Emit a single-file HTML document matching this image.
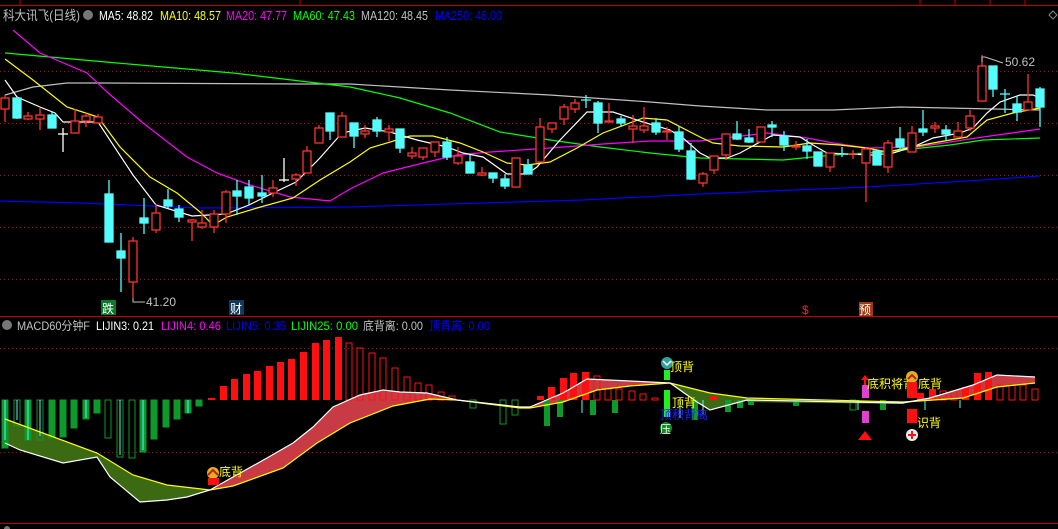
<!DOCTYPE html>
<html><head><meta charset="utf-8"><style>
html,body{margin:0;padding:0;background:#000;}
body{width:1058px;height:529px;overflow:hidden;position:relative;}
svg{position:absolute;left:0;top:0;}
text{font-family:"Liberation Sans","Noto Sans CJK SC",sans-serif;}
</style></head><body>
<svg width="1058" height="529" viewBox="0 0 1058 529">
<rect width="1058" height="529" fill="#000"/>
<line x1="0" y1="5.5" x2="1058" y2="5.5" stroke="#c00000"/>
<g stroke="#c00000"><line x1="20" y1="0" x2="20" y2="5"/><line x1="300" y1="0" x2="300" y2="5"/><line x1="920" y1="0" x2="920" y2="5"/><line x1="955" y1="0" x2="955" y2="5"/><line x1="990" y1="0" x2="990" y2="5"/><line x1="1025" y1="0" x2="1025" y2="5"/></g>
<path d="M1053 11 l4 4 -4 4 -4 -4z" fill="none" stroke="#888"/>
<g stroke="#802020" stroke-dasharray="1,3">
<line x1="0" y1="71.5" x2="1058" y2="71.5"/><line x1="0" y1="123.5" x2="1058" y2="123.5"/><line x1="0" y1="175.5" x2="1058" y2="175.5"/><line x1="0" y1="227.5" x2="1058" y2="227.5"/><line x1="0" y1="279.5" x2="1058" y2="279.5"/>
<line x1="0" y1="348.5" x2="1058" y2="348.5"/><line x1="0" y1="452.5" x2="1058" y2="452.5"/>
</g>
<text x="3" y="20" font-size="13" fill="#c0c0c0" textLength="77" lengthAdjust="spacingAndGlyphs">科大讯飞(日线)</text>
<circle cx="88" cy="15" r="5" fill="#777"/>
<text x="99" y="20" font-size="12.5" fill="#fff" textLength="54" lengthAdjust="spacingAndGlyphs">MA5: 48.82</text>
<text x="160" y="20" font-size="12.5" fill="#ffff00" textLength="61" lengthAdjust="spacingAndGlyphs">MA10: 48.57</text>
<text x="226" y="20" font-size="12.5" fill="#ff00ff" textLength="61" lengthAdjust="spacingAndGlyphs">MA20: 47.77</text>
<text x="293" y="20" font-size="12.5" fill="#00ff00" textLength="62" lengthAdjust="spacingAndGlyphs">MA60: 47.43</text>
<text x="361" y="20" font-size="12.5" fill="#c0c0c0" textLength="67" lengthAdjust="spacingAndGlyphs">MA120: 48.45</text>
<text x="435" y="20" font-size="12.5" fill="#0000ff" textLength="67" lengthAdjust="spacingAndGlyphs">MA250: 46.00</text>

<g fill="none" stroke-width="1.2">
<polyline stroke="#0000ff" points="0,201 80,203 200,208 350,207 483,203 583,200 700,194 867,187 983,180 1040,176"/>
<polyline stroke="#c0c0c0" points="5,95 33,87 67,83 100,83 300,84 350,84 450,90 550,95 650,102 700,106 767,110 833,110 900,107 1040,110"/>
<polyline stroke="#00ff00" points="5,53 117,63 233,73 350,87 400,98 450,113 500,132 550,140 600,147 650,153 700,158 783,160 833,155 883,152 950,145 983,140 1040,138"/>
<polyline stroke="#ff00ff" points="13,30 40,53 87,73 107,92 143,123 187,157 217,173 250,185 290,197 330,201 350,189 383,173 423,163 457,155 490,152 550,148 603,144 650,141 700,141 733,137 767,133 807,138 833,143 867,148 917,147 950,142 983,137 1040,129"/>
<polyline stroke="#ffff00" points="5,59 33,80 67,107 98,117 120,147 150,177 177,193 200,212 213,225 227,217 257,208 293,198 320,180 350,162 370,148 410,136 433,136 460,143 483,152 507,163 527,165 550,162 577,148 603,133 643,118 667,120 700,137 713,143 740,146 783,147 810,143 840,145 867,148 887,152 907,148 933,143 967,137 987,120 1013,113 1040,108"/>
<polyline stroke="#ffffff" points="5,80 17,97 40,107 55,113 63,122 98,122 133,175 156,205 192,216 226,214 249,205 273,193 296,182 319,159 342,133 365,128 390,132 417,140 447,147 463,153 483,157 507,174 527,174 537,167 560,140 587,112 613,112 643,122 670,130 683,138 700,153 710,158 727,158 740,153 760,142 773,135 800,137 813,145 827,153 847,154 873,155 893,153 913,147 933,138 960,133 973,128 987,113 1000,102 1020,95 1033,95 1040,98"/>
</g>

<g stroke="#ff3232" stroke-width="1.3" fill="#000">
<line x1="5" y1="95" x2="5" y2="122"/><rect x="1" y="98" width="8" height="11"/>
<line x1="28" y1="112" x2="28" y2="120"/><rect x="24" y="116" width="8" height="3"/>
<line x1="40" y1="108" x2="40" y2="130"/><rect x="36" y="115" width="8" height="4"/>
<line x1="75" y1="109" x2="75" y2="133"/><rect x="71" y="121" width="8" height="12"/>
<line x1="86" y1="113" x2="86" y2="127"/><rect x="82" y="116" width="8" height="5"/>
<line x1="98" y1="114" x2="98" y2="123"/><rect x="94" y="117" width="8" height="6"/>
<line x1="133" y1="237" x2="133" y2="298"/><rect x="129" y="241" width="8" height="41"/>
<line x1="156" y1="204" x2="156" y2="233"/><rect x="152" y="213" width="8" height="17"/>
<line x1="192" y1="219" x2="192" y2="241"/><rect x="188" y="220" width="8" height="2"/>
<line x1="202" y1="210" x2="202" y2="229"/><rect x="198" y="223" width="8" height="4"/>
<line x1="214" y1="210" x2="214" y2="233"/><rect x="210" y="214" width="8" height="13"/>
<line x1="226" y1="190" x2="226" y2="223"/><rect x="222" y="192" width="8" height="22"/>
<line x1="273" y1="180" x2="273" y2="197"/><rect x="269" y="188" width="8" height="5"/>
<line x1="296" y1="173" x2="296" y2="186"/><rect x="292" y="175" width="8" height="4"/>
<line x1="307" y1="146" x2="307" y2="173"/><rect x="303" y="151" width="8" height="22"/>
<line x1="319" y1="125" x2="319" y2="143"/><rect x="315" y="128" width="8" height="15"/>
<line x1="342" y1="112" x2="342" y2="137"/><rect x="338" y="116" width="8" height="21"/>
<line x1="365" y1="125" x2="365" y2="138"/><rect x="361" y="131" width="8" height="3"/>
<line x1="389" y1="125" x2="389" y2="141"/><rect x="385" y="129" width="8" height="3"/>
<line x1="412" y1="147" x2="412" y2="159"/><rect x="408" y="153" width="8" height="3"/>
<line x1="423" y1="148" x2="423" y2="160"/><rect x="419" y="148" width="8" height="9"/>
<line x1="435" y1="142" x2="435" y2="157"/><rect x="431" y="142" width="8" height="10"/>
<line x1="458" y1="147" x2="458" y2="165"/><rect x="454" y="156" width="8" height="7"/>
<line x1="482" y1="167" x2="482" y2="176"/><rect x="478" y="173" width="8" height="2"/>
<line x1="516" y1="158" x2="516" y2="187"/><rect x="512" y="158" width="8" height="29"/>
<line x1="540" y1="118" x2="540" y2="162"/><rect x="536" y="127" width="8" height="35"/>
<line x1="552" y1="123" x2="552" y2="133"/><rect x="548" y="123" width="8" height="6"/>
<line x1="564" y1="104" x2="564" y2="125"/><rect x="560" y="107" width="8" height="12"/>
<line x1="575" y1="99" x2="575" y2="113"/><rect x="571" y="103" width="8" height="6"/>
<line x1="609" y1="103" x2="609" y2="122"/><rect x="605" y="121" width="8" height="1"/>
<line x1="633" y1="115" x2="633" y2="143"/><rect x="629" y="126" width="8" height="3"/>
<line x1="644" y1="107" x2="644" y2="133"/><rect x="640" y="126" width="8" height="4"/>
<line x1="667" y1="127" x2="667" y2="140"/><rect x="663" y="131" width="8" height="1"/>
<line x1="703" y1="172" x2="703" y2="187"/><rect x="699" y="174" width="8" height="9"/>
<line x1="714" y1="156" x2="714" y2="174"/><rect x="710" y="156" width="8" height="14"/>
<line x1="726" y1="134" x2="726" y2="160"/><rect x="722" y="134" width="8" height="21"/>
<line x1="761" y1="127" x2="761" y2="142"/><rect x="757" y="127" width="8" height="15"/>
<line x1="796" y1="141" x2="796" y2="150"/><rect x="792" y="146" width="8" height="1"/>
<line x1="830" y1="153" x2="830" y2="172"/><rect x="826" y="153" width="8" height="14"/>
<line x1="866" y1="147" x2="866" y2="202"/><rect x="862" y="149" width="8" height="14"/>
<line x1="888" y1="140" x2="888" y2="173"/><rect x="884" y="143" width="8" height="24"/>
<line x1="912" y1="126" x2="912" y2="152"/><rect x="908" y="133" width="8" height="19"/>
<line x1="935" y1="122" x2="935" y2="133"/><rect x="931" y="126" width="8" height="2"/>
<line x1="958" y1="122" x2="958" y2="137"/><rect x="954" y="131" width="8" height="6"/>
<line x1="970" y1="110" x2="970" y2="131"/><rect x="966" y="116" width="8" height="12"/>
<line x1="982" y1="55" x2="982" y2="101"/><rect x="978" y="66" width="8" height="35"/>
<line x1="1028" y1="74" x2="1028" y2="110"/><rect x="1024" y="102" width="8" height="8"/>
</g>
<g stroke="#54fcfc" stroke-width="1.3" fill="#54fcfc">
<line x1="17" y1="97" x2="17" y2="119"/><rect x="13" y="98" width="8" height="20"/>
<line x1="52" y1="112" x2="52" y2="128"/><rect x="48" y="115" width="8" height="13"/>
<line x1="109" y1="180" x2="109" y2="242"/><rect x="105" y="194" width="8" height="48"/>
<line x1="121" y1="233" x2="121" y2="292"/><rect x="117" y="251" width="8" height="7"/>
<line x1="144" y1="198" x2="144" y2="234"/><rect x="140" y="218" width="8" height="5"/>
<line x1="168" y1="189" x2="168" y2="208"/><rect x="164" y="200" width="8" height="6"/>
<line x1="179" y1="205" x2="179" y2="222"/><rect x="175" y="209" width="8" height="8"/>
<line x1="237" y1="180" x2="237" y2="215"/><rect x="233" y="191" width="8" height="5"/>
<line x1="249" y1="180" x2="249" y2="205"/><rect x="245" y="187" width="8" height="11"/>
<line x1="262" y1="175" x2="262" y2="203"/><rect x="258" y="193" width="8" height="3"/>
<line x1="330" y1="113" x2="330" y2="140"/><rect x="326" y="113" width="8" height="18"/>
<line x1="354" y1="123" x2="354" y2="148"/><rect x="350" y="123" width="8" height="13"/>
<line x1="377" y1="117" x2="377" y2="137"/><rect x="373" y="120" width="8" height="11"/>
<line x1="400" y1="129" x2="400" y2="153"/><rect x="396" y="129" width="8" height="19"/>
<line x1="447" y1="137" x2="447" y2="160"/><rect x="443" y="142" width="8" height="15"/>
<line x1="470" y1="155" x2="470" y2="173"/><rect x="466" y="162" width="8" height="11"/>
<line x1="493" y1="173" x2="493" y2="183"/><rect x="489" y="173" width="8" height="5"/>
<line x1="505" y1="174" x2="505" y2="189"/><rect x="501" y="179" width="8" height="7"/>
<line x1="528" y1="159" x2="528" y2="174"/><rect x="524" y="165" width="8" height="9"/>
<line x1="598" y1="101" x2="598" y2="133"/><rect x="594" y="103" width="8" height="20"/>
<line x1="621" y1="116" x2="621" y2="127"/><rect x="617" y="119" width="8" height="4"/>
<line x1="656" y1="118" x2="656" y2="135"/><rect x="652" y="123" width="8" height="9"/>
<line x1="679" y1="126" x2="679" y2="152"/><rect x="675" y="132" width="8" height="17"/>
<line x1="691" y1="143" x2="691" y2="180"/><rect x="687" y="151" width="8" height="28"/>
<line x1="737" y1="121" x2="737" y2="140"/><rect x="733" y="134" width="8" height="5"/>
<line x1="749" y1="129" x2="749" y2="143"/><rect x="745" y="138" width="8" height="4"/>
<line x1="772" y1="121" x2="772" y2="137"/><rect x="768" y="125" width="8" height="2"/>
<line x1="784" y1="131" x2="784" y2="151"/><rect x="780" y="136" width="8" height="9"/>
<line x1="807" y1="139" x2="807" y2="159"/><rect x="803" y="146" width="8" height="5"/>
<line x1="818" y1="152" x2="818" y2="166"/><rect x="814" y="152" width="8" height="14"/>
<line x1="877" y1="151" x2="877" y2="165"/><rect x="873" y="151" width="8" height="14"/>
<line x1="900" y1="127" x2="900" y2="151"/><rect x="896" y="139" width="8" height="8"/>
<line x1="923" y1="110" x2="923" y2="136"/><rect x="919" y="129" width="8" height="3"/>
<line x1="946" y1="125" x2="946" y2="141"/><rect x="942" y="130" width="8" height="4"/>
<line x1="993" y1="66" x2="993" y2="97"/><rect x="989" y="66" width="8" height="23"/>
<line x1="1017" y1="96" x2="1017" y2="121"/><rect x="1013" y="104" width="8" height="8"/>
<line x1="1040" y1="87" x2="1040" y2="127"/><rect x="1036" y="89" width="8" height="18"/>
</g>
<g stroke-width="1.3">
<line x1="63" y1="128" x2="63" y2="152" stroke="#fff"/><line x1="58" y1="134" x2="68" y2="134" stroke="#fff"/>
<line x1="284" y1="158" x2="284" y2="182" stroke="#fff"/><line x1="279" y1="180" x2="289" y2="180" stroke="#fff"/>
<line x1="586" y1="95" x2="586" y2="108" stroke="#54fcfc"/><line x1="581" y1="100" x2="591" y2="100" stroke="#54fcfc"/>
<line x1="842" y1="147" x2="842" y2="157" stroke="#54fcfc"/><line x1="837" y1="154" x2="847" y2="154" stroke="#54fcfc"/>
<line x1="853" y1="150" x2="853" y2="159" stroke="#ff3232"/><line x1="848" y1="154" x2="858" y2="154" stroke="#ff3232"/>
<line x1="1005" y1="89" x2="1005" y2="113" stroke="#54fcfc"/><line x1="1000" y1="94" x2="1010" y2="94" stroke="#54fcfc"/>
</g>
<text x="146" y="306" font-size="12" fill="#c0c0c0">41.20</text>
<path d="M133 298 v4 h12" stroke="#c0c0c0" fill="none"/>
<text x="1005" y="66" font-size="12" fill="#c0c0c0">50.62</text>
<path d="M982 62 v-5 h3 M985 57 l18 6" stroke="#c0c0c0" fill="none"/>
<rect x="101" y="300" width="15" height="15" fill="#0a7a2a"/><text x="102" y="313" font-size="12" fill="#fff">跌</text>
<rect x="229" y="300" width="15" height="15" fill="#13385c"/><text x="230" y="313" font-size="12" fill="#fff">财</text>
<text x="802" y="314" font-size="12" fill="#ff2020">$</text>
<rect x="859" y="302" width="14" height="14" fill="#a03a10"/><text x="859" y="314" font-size="12" fill="#fff">预</text>

<line x1="0" y1="316.5" x2="1058" y2="316.5" stroke="#c00000"/>
<circle cx="7" cy="325" r="5" fill="#777"/>
<text x="17" y="330" font-size="12" fill="#c0c0c0" textLength="73" lengthAdjust="spacingAndGlyphs">MACD60分钟F</text>
<text x="96" y="330" font-size="12" fill="#fff" textLength="58" lengthAdjust="spacingAndGlyphs">LIJIN3: 0.21</text>
<text x="161" y="330" font-size="12" fill="#ff00ff" textLength="60" lengthAdjust="spacingAndGlyphs">LIJIN4: 0.46</text>
<text x="226" y="330" font-size="12" fill="#0000ff" textLength="60" lengthAdjust="spacingAndGlyphs">LIJIN5: 0.35</text>
<text x="291" y="330" font-size="12" fill="#00ff00" textLength="67" lengthAdjust="spacingAndGlyphs">LIJIN25: 0.00</text>
<text x="363" y="330" font-size="12" fill="#c0c0c0" textLength="60" lengthAdjust="spacingAndGlyphs">底背离: 0.00</text>
<text x="429" y="330" font-size="12" fill="#0000ff" textLength="61" lengthAdjust="spacingAndGlyphs">顶背离: 0.00</text>

<path d="M5,419 L97,453 L133,475 L167,485 L210,490 L187,497 L167,500 L140,502 L110,477 L97,457 L63,463 L20,450 L5,443 Z" fill="#3c6a12"/>
<path d="M210,490 L233,477 L267,458 L293,443 L313,427 L333,407 L360,395 L383,390 L400,392 L427,393 L457,400 L430,399 L393,406 L350,423 L317,443 L283,468 L233,486 Z" fill="#c83a44"/>
<path d="M530,407 L563,393 L587,379 L630,381 L670,383 L630,386 L597,390 L563,402 Z" fill="#c83a44"/>
<path d="M670,383 L710,393 L747,398 L747,400 L710,410 L697,402 Z" fill="#3c6a12"/>
<path d="M747,398 L903,402 L903,404 L747,402Z" fill="#3c6a12"/>
<path d="M903,403 L930,398 L973,385 L997,375 L1035,377 L1035,383 L997,387 L963,398 Z" fill="#c83a44"/>
<g fill="#0d9a2a" stroke="#0d9a2a">
<rect x="2" y="400" width="6" height="48"/><rect x="25" y="400" width="6" height="40"/><rect x="49" y="400" width="6" height="38"/><rect x="60" y="400" width="6" height="37"/><rect x="71" y="400" width="6" height="28"/><rect x="83" y="400" width="6" height="19"/><rect x="94" y="400" width="6" height="13"/><rect x="140" y="400" width="6" height="52"/><rect x="151" y="400" width="6" height="39"/><rect x="163" y="400" width="6" height="27"/><rect x="174" y="400" width="6" height="19"/><rect x="185" y="400" width="6" height="13"/><rect x="196" y="400" width="6" height="6"/>
</g>
<g fill="none" stroke="#0d9a2a"><rect x="14" y="400" width="6" height="26"/><rect x="37" y="400" width="6" height="40"/><rect x="105" y="400" width="6" height="38"/><rect x="117" y="400" width="6" height="57"/><rect x="129" y="400" width="6" height="58"/>
<rect x="500" y="400" width="6" height="24"/><rect x="512" y="400" width="6" height="15"/><rect x="850" y="400" width="6" height="10"/><rect x="470" y="400" width="6" height="8"/></g>
<g fill="#0d9a2a"><rect x="544" y="400" width="6" height="26"/><rect x="557" y="400" width="6" height="17"/><rect x="590" y="400" width="6" height="15"/><rect x="612" y="400" width="6" height="13"/><rect x="725" y="400" width="6" height="12"/><rect x="737" y="400" width="6" height="8"/><rect x="748" y="400" width="6" height="5"/><rect x="793" y="400" width="6" height="6"/><rect x="880" y="400" width="6" height="10"/><rect x="692" y="400" width="6" height="20"/></g>
<g stroke="#54fcfc"><line x1="5" y1="400" x2="5" y2="440"/><line x1="17" y1="400" x2="17" y2="420"/><line x1="28" y1="400" x2="28" y2="440"/><line x1="40" y1="400" x2="40" y2="436"/><line x1="86" y1="400" x2="86" y2="418"/><line x1="120" y1="400" x2="120" y2="455"/><line x1="143" y1="400" x2="143" y2="450"/><line x1="188" y1="400" x2="188" y2="413"/><line x1="680" y1="400" x2="680" y2="418"/><line x1="703" y1="400" x2="703" y2="414"/><line x1="582" y1="400" x2="582" y2="413"/><line x1="858" y1="400" x2="858" y2="410"/><line x1="925" y1="400" x2="925" y2="410"/><line x1="960" y1="400" x2="960" y2="408"/></g>
<g fill="#ff1010">
<rect x="208" y="398" width="7" height="2"/><rect x="220" y="386" width="7" height="14"/><rect x="231" y="379" width="7" height="21"/><rect x="243" y="374" width="7" height="26"/><rect x="254" y="371" width="7" height="29"/><rect x="266" y="366" width="7" height="34"/><rect x="277" y="362" width="7" height="38"/><rect x="288" y="359" width="7" height="41"/><rect x="300" y="352" width="7" height="48"/><rect x="312" y="343" width="7" height="57"/><rect x="323" y="340" width="7" height="60"/><rect x="335" y="337" width="7" height="63"/>
<rect x="537" y="396" width="7" height="4"/><rect x="548" y="387" width="7" height="13"/><rect x="560" y="378" width="7" height="22"/><rect x="570" y="373" width="7" height="27"/><rect x="582" y="372" width="7" height="28"/><rect x="917" y="393" width="7" height="7"/><rect x="929" y="389" width="7" height="11"/><rect x="962" y="387" width="7" height="13"/><rect x="974" y="373" width="7" height="27"/><rect x="985" y="372" width="7" height="28"/><rect x="710" y="396" width="7" height="4"/>
</g>
<g fill="none" stroke="#ff1010">
<rect x="346" y="343" width="6" height="57"/><rect x="357" y="348" width="6" height="52"/><rect x="369" y="353" width="6" height="47"/><rect x="380" y="358" width="6" height="42"/><rect x="392" y="368" width="6" height="32"/><rect x="404" y="377" width="6" height="23"/><rect x="415" y="383" width="6" height="17"/><rect x="426" y="385" width="6" height="15"/><rect x="438" y="392" width="6" height="8"/><rect x="449" y="396" width="6" height="4"/>
<rect x="594" y="376" width="6" height="24"/><rect x="605" y="389" width="6" height="11"/><rect x="616" y="389" width="6" height="11"/><rect x="629" y="391" width="6" height="9"/><rect x="640" y="394" width="6" height="6"/><rect x="652" y="398" width="6" height="2"/>
<rect x="940" y="391" width="6" height="9"/><rect x="951" y="391" width="6" height="9"/><rect x="997" y="385" width="6" height="15"/><rect x="1009" y="385" width="6" height="15"/><rect x="1020" y="385" width="6" height="15"/><rect x="1032" y="389" width="6" height="11"/>
</g>
<g fill="none" stroke-width="1.2">
<polyline stroke="#ffff00" points="5,419 97,453 133,475 167,485 210,490 233,486 283,468 317,443 350,423 393,406 430,399 457,400 520,408 530,408 563,402 597,390 630,386 670,383 710,393 747,398 903,402 963,398 997,387 1035,383"/>
<polyline stroke="#ffffff" points="5,443 20,450 63,463 97,457 110,477 140,502 167,500 187,497 210,490 233,477 267,458 293,443 313,427 333,407 360,395 383,390 400,392 427,393 457,400 520,407 530,407 563,393 587,379 630,381 670,383 697,402 710,410 747,400 903,403 930,398 973,385 997,375 1035,377"/>
</g>
<circle cx="213" cy="473" r="6" fill="#e0b020"/><path d="M208 475 l5 -5 5 5" stroke="#c02010" stroke-width="2" fill="none"/><rect x="208" y="478" width="11" height="7" fill="#ff1010"/>
<text x="219" y="476" font-size="12" fill="#ffff00">底背</text>
<circle cx="667" cy="363" r="6" fill="#30a0a0"/><path d="M663 361 l4 4 4 -4" stroke="#fff" stroke-width="1.5" fill="none"/>
<text x="670" y="371" font-size="12" fill="#ffff00">顶背</text>
<rect x="664" y="370" width="6" height="10" fill="#22ee22"/><rect x="664" y="390" width="6" height="27" fill="#22ee22"/>
<text x="672" y="407" font-size="12" fill="#ffff00">顶背</text>
<text x="660" y="419" font-size="12" fill="#2020ff">顶积背离</text>
<circle cx="666" cy="428" r="6" fill="#118a22"/><text x="660" y="433" font-size="11" fill="#fff">压</text>
<path d="M865 375 l-4 5 h3 v5 h2 v-5 h3z" fill="#ff1010"/>
<rect x="862" y="385" width="7" height="13" fill="#e040d0"/><rect x="862" y="411" width="7" height="12" fill="#e040d0"/>
<path d="M858 440 l7 -9 7 9z" fill="#ff1010"/>
<text x="867" y="388" font-size="12" fill="#ffff00">底积将背</text>
<circle cx="912" cy="377" r="6" fill="#e0b020"/><path d="M908 379 l4 -4 4 4" stroke="#c02010" stroke-width="2" fill="none"/>
<text x="918" y="388" font-size="12" fill="#ffff00">底背</text>
<rect x="907" y="382" width="10" height="16" fill="#ff1010"/><rect x="907" y="409" width="10" height="14" fill="#ff1010"/>
<text x="917" y="427" font-size="12" fill="#ffff00">识背</text>
<circle cx="912" cy="435" r="6" fill="#eee"/><path d="M912 431 v8 M908 435 h8" stroke="#ff1010" stroke-width="2"/>
<line x1="0" y1="523.5" x2="1058" y2="523.5" stroke="#c00000"/>
<circle cx="7" cy="529" r="3" fill="#777"/>
</svg>
</body></html>
